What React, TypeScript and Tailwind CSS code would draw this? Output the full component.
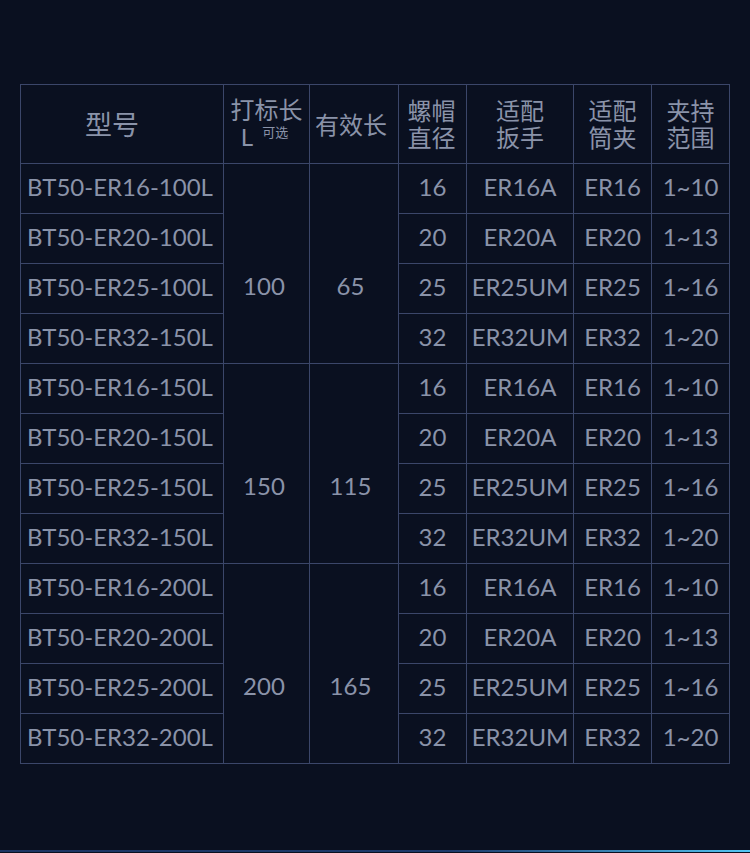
import React from 'react';

interface Row {
  model: string;
  nut: string;
  wrench: string;
  collet: string;
  range: string;
}

interface Group {
  mark: string;
  effective: string;
  rows: Row[];
}

const makeRows = (len: string): Row[] => [
  { model: `BT50-ER16-${len}L`, nut: '16', wrench: 'ER16A', collet: 'ER16', range: '1~10' },
  { model: `BT50-ER20-${len}L`, nut: '20', wrench: 'ER20A', collet: 'ER20', range: '1~13' },
  { model: `BT50-ER25-${len}L`, nut: '25', wrench: 'ER25UM', collet: 'ER25', range: '1~16' },
  { model: `BT50-ER32-${len}L`, nut: '32', wrench: 'ER32UM', collet: 'ER32', range: '1~20' },
];

const groups: Group[] = [
  { mark: '100', effective: '65', rows: makeRows('100').map((r, i) => (i === 3 ? { ...r, model: 'BT50-ER32-150L' } : r)) },
  { mark: '150', effective: '115', rows: makeRows('150') },
  { mark: '200', effective: '165', rows: makeRows('200') },
];

const font = "font-['Lato','Noto_Sans_CJK_SC',sans-serif]";
const cell = 'border border-[#3b4669] text-center align-middle p-0';

const App: React.FC = () => {
  return (
    <div className={`w-[750px] h-[853px] bg-[#0a1020] flex flex-col ${font} text-[#8a93a9]`}>
      <div className="pt-[84px] pl-[20px]">
        <table className="border-collapse table-fixed w-[709px]">
          <colgroup>
            <col className="w-[203px]" />
            <col className="w-[86px]" />
            <col className="w-[89px]" />
            <col className="w-[68px]" />
            <col className="w-[107px]" />
            <col className="w-[78px]" />
            <col className="w-[78px]" />
          </colgroup>
          <thead>
            <tr className="h-[79px] text-[24px] leading-[27px]">
              <th className={`${cell} font-normal text-[27px] pr-[20px]`}>型号</th>
              <th className={`${cell} font-normal`}>
                <div className="-mt-[2px]">打标长</div>
                <div className="flex justify-center items-start gap-[9px] pr-[4px]">
                  <span>L</span>
                  <span className="text-[13px] leading-[18px]">可选</span>
                </div>
              </th>
              <th className={`${cell} font-normal pr-[6px]`}>有效长</th>
              <th className={`${cell} font-normal pr-[2px]`}>螺帽<br />直径</th>
              <th className={`${cell} font-normal`}>适配<br />扳手</th>
              <th className={`${cell} font-normal`}>适配<br />筒夹</th>
              <th className={`${cell} font-normal`}>夹持<br />范围</th>
            </tr>
          </thead>
          <tbody className="text-[24px] leading-[28px]">
            {groups.map((g) =>
              g.rows.map((r, i) => (
                <tr key={r.model + g.mark} className="h-[50px]">
                  <td className={`${cell} pb-[4px] pr-[4px]`}>{r.model}</td>
                  {i === 0 && (
                    <>
                      <td rowSpan={4} className={`${cell} pt-[44px] pr-[5px]`}>{g.mark}</td>
                      <td rowSpan={4} className={`${cell} pt-[44px] pr-[7px]`}>{g.effective}</td>
                    </>
                  )}
                  <td className={`${cell} pb-[4px]`}>{r.nut}</td>
                  <td className={`${cell} pb-[4px]`}>{r.wrench}</td>
                  <td className={`${cell} pb-[4px]`}>{r.collet}</td>
                  <td className={`${cell} pb-[4px]`}>{r.range}</td>
                </tr>
              ))
            )}
          </tbody>
        </table>
      </div>
      <div className="mt-auto mb-[1px] h-[2px] bg-gradient-to-r from-[#1d3563] via-[#1d3a6a] via-60% to-[#55c8f5]" />
    </div>
  );
};

export default App;
